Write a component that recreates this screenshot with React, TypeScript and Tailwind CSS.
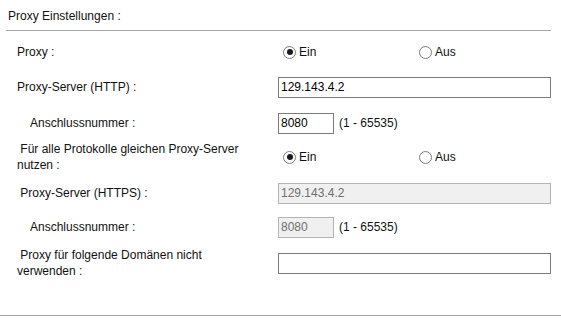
import { ReactNode } from 'react';

function Radio({ checked, label }: { checked?: boolean; label: string }) {
  return (
    <span className="flex items-center">
      <span className="flex h-[13px] w-[13px] items-center justify-center rounded-full border border-[#7c7c7c] bg-white">
        {checked && <span className="h-[6px] w-[6px] rounded-full bg-[#1a1a1a]" />}
      </span>
      <span className="ml-[3px]">{label}</span>
    </span>
  );
}

function Row({ label, indent, h, children }: { label: string; indent?: boolean; h: string; children: ReactNode }) {
  return (
    <div className={`flex items-center ${h}`}>
      <div className={`w-[278px] shrink-0 whitespace-pre-wrap pr-[20px] leading-[16px] ${indent ? 'pl-[30px]' : 'pl-[17px]'}`}>
        {label}
      </div>
      <div className="flex items-center">{children}</div>
    </div>
  );
}

function TextBox({ value, wide, disabled }: { value: string; wide?: boolean; disabled?: boolean }) {
  return (
    <div
      className={`flex h-[21px] items-center border pl-[2px] ${wide ? 'w-[273px]' : 'w-[56px]'} ${
        disabled ? 'border-[#b4b4b4] bg-[#f0f0f0] text-[#6f6f6f]' : 'border-[#7a7a7a] bg-white text-black'
      }`}
    >
      {value}
    </div>
  );
}

export default function App() {
  return (
    <div className="flex h-[321px] w-[561px] flex-col bg-white text-[12px] text-[#111] font-['Liberation_Sans',Arial,sans-serif]">
      <div className="flex h-[30px] items-center pl-[8px] pt-[1px]">Proxy Einstellungen :</div>
      <div className="ml-[6px] w-[545px] border-t border-[#a4a4a4]" />

      <div className="pt-[3px]">
        <Row label="Proxy :" h="h-[36px]">
          <div className="flex pl-[5px]">
            <div className="w-[136px]">
              <Radio checked label="Ein" />
            </div>
            <Radio label="Aus" />
          </div>
        </Row>
        <Row label="Proxy-Server (HTTP) :" h="h-[34px]">
          <TextBox value="129.143.4.2" wide />
        </Row>
        <Row label="Anschlussnummer :" indent h="h-[38px]">
          <TextBox value="8080" />
          <span className="ml-[5px]">(1 - 65535)</span>
        </Row>
        <Row label={' Für alle Protokolle gleichen Proxy-Server nutzen :'} h="h-[30px]">
          <div className="flex pl-[5px]">
            <div className="w-[136px]">
              <Radio checked label="Ein" />
            </div>
            <Radio label="Aus" />
          </div>
        </Row>
        <Row label={' Proxy-Server (HTTPS) :'} h="h-[42px]">
          <TextBox value="129.143.4.2" wide disabled />
        </Row>
        <Row label="Anschlussnummer :" indent h="h-[26px]">
          <TextBox value="8080" disabled />
          <span className="ml-[5px]">(1 - 65535)</span>
        </Row>
        <Row label={' Proxy für folgende Domänen nicht verwenden :'} h="h-[46px]">
          <TextBox value="" wide />
        </Row>
      </div>

      <div className="mb-[5px] mt-auto border-t border-[#a4a4a4]" />
    </div>
  );
}
